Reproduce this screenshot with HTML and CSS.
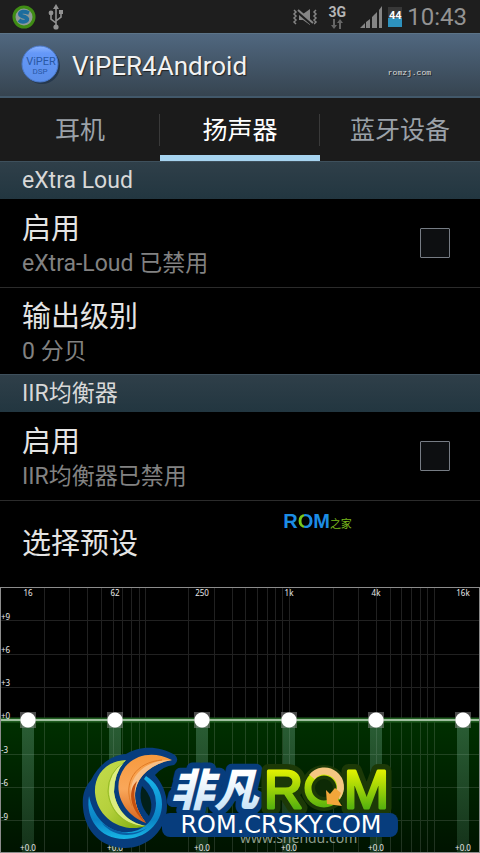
FILE: index.html
```html
<!DOCTYPE html>
<html lang="zh-CN">
<head>
    <meta charset="UTF-8">
    <meta name="viewport" content="width=device-width, initial-scale=1.0">
    <title>ViPER4Android</title>
    <link rel="stylesheet" href="styles.css">
</head>
<body>
    <div class="status-bar">
        <svg class="sync-icon" width="24" height="24" viewBox="0 0 24 24">
            <circle cx="12" cy="12" r="10" fill="#8f9a98" stroke="#3f8c14" stroke-width="3"/>
            <path d="M17 8Q9 5 8 9Q8 11 13 12Q17 14 14 16Q10 18 7 15" fill="none" stroke="#1d6d9d" stroke-width="4"/>
        </svg>
        <svg width="16" height="26" viewBox="0 0 16 26" fill="#929292" stroke="#929292">
            <path d="M8 4V22M8 19L3 15V10M8 17L13 13V8" fill="none" stroke-width="1.6"/>
            <path d="M8 0L11 5H5Z" stroke="none"/>
            <circle cx="3" cy="9" r="2.4" stroke="none"/>
            <circle cx="8" cy="23" r="2.6" stroke="none"/>
            <path d="M11 6H15V10H11Z" stroke="none"/>
        </svg>
        <div class="status-right">
            <svg width="26" height="18" viewBox="0 0 26 18" fill="none" stroke="#858585">
                <path d="M2 2l2 2-2 2 2 2-2 2 2 2-2 2 2 2M24 2l-2 2 2 2-2 2 2 2-2 2 2 2-2 2" stroke-width="1.5"/>
                <path d="M7 6H11L18 1V17L11 12H7Z" fill="#858585" stroke="none"/>
                <path d="M6 4L21 17" stroke="#1e1e1e" stroke-width="3"/>
                <path d="M6 2L21 15" stroke-width="2"/>
            </svg>
            <div class="network">
                <span>3G</span>
                <svg width="14" height="10" viewBox="0 0 14 10" fill="#666">
                    <path d="M3 0H5V6H7L4 10L1 6H3ZM9 10H11V4H13L10 0L7 4H9Z"/>
                </svg>
            </div>
            <svg class="signal-icon" width="23" height="22" viewBox="0 0 23 22" fill="#858585">
                <path d="M0 22L5 17V22ZM6 16L10 13V22H6ZM12 11L15 8V22H12ZM17 6V22H14V9ZM19 4L22 0V22H19Z"/>
            </svg>
            <div class="battery">44</div>
            <time class="clock">10:43</time>
        </div>
    </div>

    <header class="app-header">
        <svg width="40" height="40" viewBox="0 0 40 40">
            <defs>
                <linearGradient id="disc" x1="0" y1="0" x2="0" y2="1">
                    <stop offset="0" stop-color="#8bb4ff"/>
                    <stop offset="0.2" stop-color="#6598f8"/>
                    <stop offset="1" stop-color="#5a8eea"/>
                </linearGradient>
            </defs>
            <circle cx="21" cy="21" r="18" fill="#26384c"/>
            <circle cx="19" cy="19" r="18" fill="url(#disc)" stroke="#4a78c8"/>
            <text x="20" y="20" class="disc-name">ViPER</text>
            <text x="19" y="29" class="disc-dsp">DSP</text>
        </svg>
        <h1>ViPER4Android</h1>
        <span class="site-mark">romzj.com</span>
    </header>

    <nav class="tabs">
        <button type="button">耳机</button>
        <button type="button" class="active">扬声器</button>
        <button type="button">蓝牙设备</button>
    </nav>

    <main>
        <h2 class="section-title">eXtra Loud</h2>
        <label class="setting">
            <span class="setting-text">
                <span class="setting-name">启用</span>
                <span class="setting-info">eXtra-Loud 已禁用</span>
            </span>
            <input type="checkbox">
        </label>
        <div class="setting">
            <div class="setting-text">
                <div class="setting-name">输出级别</div>
                <div class="setting-info">0 分贝</div>
            </div>
        </div>

        <h2 class="section-title">IIR均衡器</h2>
        <label class="setting">
            <span class="setting-text">
                <span class="setting-name">启用</span>
                <span class="setting-info">IIR均衡器已禁用</span>
            </span>
            <input type="checkbox">
        </label>
        <div class="setting">
            <div class="setting-name">选择预设</div>
            <div class="rom-mark"><b>R<span class="rom-o">O</span>M</b>之家</div>
        </div>

        <div class="equalizer">
            <svg class="grid" viewBox="0 0 480 266">
                <defs>
                    <linearGradient id="level" x1="0" y1="0" x2="0" y2="1">
                        <stop offset="0" stop-color="#003000"/>
                        <stop offset="1" stop-color="#001300"/>
                    </linearGradient>
                </defs>
                <rect x="0" y="132" width="480" height="134" fill="url(#level)"/>
                <path class="grid-lines" d="M44 0V265M69 0V265M87 0V265M101 0V265M113 0V265M122 0V265M131 0V265M139 0V265M145 0V265M188 0V265M214 0V265M232 0V265M245 0V265M257 0V265M267 0V265M275 0V265M282 0V265M289 0V265M333 0V265M358 0V265M376 0V265M390 0V265M401 0V265M411 0V265M420 0V265M427 0V265M434 0V265M0 33H480M0 67H480M0 100H480M0 167H480M0 200H480M0 233H480"/>
                <path d="M0 133H480" stroke="#1f5c1f" stroke-width="5"/>
                <path d="M0 133H480" stroke="#9fbf9f" stroke-width="2"/>
                <rect x="0.5" y="0.5" width="479" height="265" fill="none" stroke="#8c8c8c"/>
                <g class="db-labels">
                    <text x="1" y="33">+9</text>
                    <text x="1" y="66">+6</text>
                    <text x="1" y="99">+3</text>
                    <text x="1" y="132">+0</text>
                    <text x="1" y="166">-3</text>
                    <text x="1" y="199">-6</text>
                    <text x="1" y="233">-9</text>
                </g>
            </svg>

            <div class="bands">
                <div class="band"><label for="b16">16</label><input id="b16" type="range" min="-12" max="12" value="0"><output for="b16">+0.0</output></div>
                <div class="band"><label for="b62">62</label><input id="b62" type="range" min="-12" max="12" value="0"><output for="b62">+0.0</output></div>
                <div class="band"><label for="b250">250</label><input id="b250" type="range" min="-12" max="12" value="0"><output for="b250">+0.0</output></div>
                <div class="band"><label for="b1k">1k</label><input id="b1k" type="range" min="-12" max="12" value="0"><output for="b1k">+0.0</output></div>
                <div class="band"><label for="b4k">4k</label><input id="b4k" type="range" min="-12" max="12" value="0"><output for="b4k">+0.0</output></div>
                <div class="band"><label for="b16k">16k</label><input id="b16k" type="range" min="-12" max="12" value="0"><output for="b16k">+0.0</output></div>
            </div>

            <svg class="watermark" viewBox="0 0 320 107">
                <defs>
                    <linearGradient id="lime" x1="0" y1="0" x2="1" y2="1">
                        <stop offset="0" stop-color="#c5dc4c"/>
                        <stop offset="0.5" stop-color="#b5d03c"/>
                        <stop offset="1" stop-color="#79a80b"/>
                    </linearGradient>
                    <linearGradient id="orange" x1="0" y1="0" x2="0" y2="1">
                        <stop offset="0" stop-color="#f79a3e"/>
                        <stop offset="0.5" stop-color="#f9a75a"/>
                        <stop offset="1" stop-color="#d8641c"/>
                    </linearGradient>
                    <linearGradient id="ring" x1="0" y1="0" x2="0" y2="1">
                        <stop offset="0" stop-color="#18b4ea"/>
                        <stop offset="0.7" stop-color="#0b84c5"/>
                        <stop offset="1" stop-color="#17b5e5"/>
                    </linearGradient>
                    <linearGradient id="ice" x1="0" y1="0" x2="0" y2="1">
                        <stop offset="0.3" stop-color="#ffffff"/>
                        <stop offset="1" stop-color="#b9dcf5"/>
                    </linearGradient>
                    <linearGradient id="green" x1="0" y1="22" x2="0" y2="62" gradientUnits="userSpaceOnUse">
                        <stop offset="0" stop-color="#e9f500"/>
                        <stop offset="1" stop-color="#57b20e"/>
                    </linearGradient>
                </defs>
                <text x="160" y="97" class="shendu">www.shendu.com</text>
                <!-- dark blue outline behind the swirl -->
                <path d="M46 8C32 9 19 18 11 34C4 42 2 50 3 62C5 86 22 102 45 102C68 102 87 84 87 60C87 46 81 36 75 29Q83 20 94 19Q100 14 95 9C77-2 57 1 46 8Z" fill="#073d7d"/>
                <path d="M62 40Q76 54 69 70Q57 57 62 40Z" fill="#02201a"/>
                <path d="M66 30C76 36 82 46 82 58C82 78 65 93 44 93C20 93 5 73 9 50C13 70 26 84 42 86C60 88 76 76 76 57Q76 43 64 33Z" fill="url(#ring)"/>
                <path d="M22 77C34 92 54 92 67 82Q45 94 22 77Z" fill="#0a5fa5"/>
                <path d="M46 14C24 15 14 31 15 47C17 72 42 88 66 80C48 77 36 63 34 46Q34 26 46 14Z" fill="url(#lime)"/>
                <path d="M46 14Q34 26 34 46C36 63 48 77 66 80C46 80 30 65 29 46Q29 25 46 14Z" fill="#dcec80"/>
                <path d="M44 16Q28 27 28 45C29 63 42 77 58 80" fill="none" stroke="#95bb25"/>
                <path d="M92 14C74 5 56 8 45 21C30 41 42 69 66 77C53 61 51 43 63 29Q74 17 92 14Z" fill="url(#orange)"/>
                <path d="M92 14C62 13 42 36 55 61Q59 70 66 77C53 61 51 43 63 29Q74 17 92 14Z" fill="#f8c088"/>
                <path d="M66 77C48 62 48 43 57 35C52 48 54 61 66 77Z" fill="#c5500f"/>
                <path d="M82 14C56 16 42 36 52 60" fill="none" stroke="#e07b26"/>
                <text x="90" y="60" class="feifan">非凡</text>
                <g class="rom-back">
                    <text x="184" y="62">R</text>
                    <circle cx="244" cy="42" r="16"/>
                    <text x="264" y="62">M</text>
                </g>
                <g class="rom-front">
                    <text x="184" y="62">R</text>
                    <circle cx="244" cy="42" r="16"/>
                    <text x="264" y="62">M</text>
                </g>
                <path d="M232 31A16 16 0 0 1 257 51" fill="none" stroke="#f5c782" stroke-width="7"/>
                <path d="M246 44L250 48L255 42L261 47L258 54L262 60L247 58Z" fill="#f2a63a"/>
                <rect x="82" y="67" width="236" height="24" rx="8" fill="#073d7d"/>
                <text x="201" y="87" class="crsky">ROM.CRSKY.COM</text>
            </svg>
        </div>
    </main>
</body>
</html>
```
FILE: styles.css
```css
* {
    box-sizing: border-box;
}

body {
    margin: 0;
    background-color: #000;
    color: #e4e4e4;
    font-family: Roboto, "Noto Sans CJK SC", sans-serif;
}

.status-bar {
    display: flex;
    align-items: center;
    gap: 12px;
    height: 33px;
    padding: 0 13px 0 12px;
    background-color: #1e1e1e;
}

.status-right {
    display: flex;
    align-items: center;
    gap: 5px;
    margin-left: auto;
}

.network {
    display: flex;
    flex-direction: column;
    align-items: center;
    width: 28px;
    color: #b5b5b5;
    font-size: 14px;
    font-weight: bold;
    line-height: 14px;
}

.signal-icon {
    margin-left: 4px;
}

.battery {
    width: 14px;
    height: 20px;
    background: linear-gradient(#383838 55%, #2d91bd 55%);
    color: #fff;
    font-size: 11px;
    font-weight: bold;
    line-height: 18px;
    text-align: center;
}

.clock {
    color: #939393;
    font-size: 24px;
    line-height: 32px;
}

.app-header {
    display: flex;
    align-items: center;
    gap: 11px;
    height: 65px;
    padding: 0 49px 0 21px;
    background: linear-gradient(#50677f, #364450);
    border-top: 1px solid #5c7488;
    border-bottom: 2px solid #42586a;
}

.app-header h1 {
    margin: 2px 0 0;
    color: #f2f2f2;
    font-size: 26px;
    font-weight: normal;
    text-shadow: 1px 1px 1px #222;
}

.disc-name, .disc-dsp {
    fill: #2958a4;
    font-size: 11px;
    text-anchor: middle;
}

.disc-dsp {
    font-size: 8px;
}

.site-mark {
    margin: 15px 0 0 auto;
    color: #ddd;
    font-family: "Liberation Mono", monospace;
    font-size: 8px;
    text-shadow: 1px 1px 0 #222;
}

.tabs {
    display: grid;
    grid-template-columns: 1fr 1fr 1fr;
    height: 63px;
    background-color: #1b1b1b;
}

.tabs button {
    padding: 2px 0 0;
    border: none;
    border-bottom: 6px solid transparent;
    background: linear-gradient(#3a3a3a, #3a3a3a) right 16px / 1px 32px no-repeat;
    color: #9ba2a9;
    font-family: inherit;
    font-size: 25px;
    white-space: nowrap;
}

.tabs button:last-child {
    background: none;
}

.tabs .active {
    border-bottom-color: #a6d3ef;
    color: #fff;
}

.section-title {
    height: 38px;
    margin: 0;
    padding-left: 22px;
    border-top: 1px solid #3e505c;
    background: linear-gradient(#2f3f49, #223640);
    color: #d8d8d8;
    font-size: 23px;
    font-weight: normal;
    line-height: 38px;
}

.setting {
    position: relative;
    display: flex;
    align-items: center;
    justify-content: space-between;
    height: 88px;
    padding: 0 30px 0 22px;
}

.setting + .setting {
    height: 87px;
    border-top: 1px solid #2b2b2b;
}

.setting-text {
    display: flex;
    flex-direction: column;
    padding-top: 4px;
}

.setting-name {
    font-size: 29px;
    line-height: 38px;
}

.setting-info {
    color: #828282;
    font-size: 23px;
    line-height: 32px;
}

.setting input {
    appearance: none;
    width: 30px;
    height: 30px;
    margin: 0;
    border: 1px solid #767c84;
    border-radius: 1px;
    background-color: #0d0f11;
}

.setting input:checked {
    background-color: #a6d3ef;
}

.rom-mark {
    position: absolute;
    top: 8px;
    left: 59%;
    color: #78b81b;
    font-size: 11px;
    line-height: 24px;
}

.rom-mark b {
    color: #1c8de4;
    font-family: "Liberation Sans", sans-serif;
    font-size: 20px;
}

.rom-o {
    background: linear-gradient(to right, #78c81b 40%, #1c8de4 40%);
    background-clip: text;
    color: transparent;
}

.equalizer {
    position: relative;
    overflow: hidden;
}

.grid {
    display: block;
    width: 100%;
}

.grid-lines {
    fill: none;
    stroke: #fff;
    stroke-opacity: 0.13;
    shape-rendering: crispEdges;
}

.db-labels, .band {
    color: #e8e8e8;
    fill: #e8e8e8;
    font-family: "Noto Sans", sans-serif;
    font-size: 8px;
    line-height: 10px;
}

.bands {
    position: absolute;
    inset: 0;
    display: flex;
    justify-content: space-between;
    padding: 0 7px 0 18px;
}

.band {
    display: grid;
    grid-template-columns: 20px;
    grid-template-rows: 100%;
    justify-items: center;
}

.band > * {
    grid-area: 1 / 1;
}

.band label {
    padding-top: 1px;
}

.band output {
    align-self: end;
}

.band input {
    appearance: none;
    writing-mode: vertical-lr;
    direction: rtl;
    width: 16px;
    height: 100%;
    margin: 0;
    background: linear-gradient(rgba(120, 180, 150, 0.35), rgba(80, 140, 100, 0.25)) center bottom / 12px 50% no-repeat;
}

.band input::-webkit-slider-thumb {
    appearance: none;
    width: 16px;
    height: 16px;
    background: radial-gradient(circle, #fff 7px, rgba(150, 150, 150, 0.5) 8px);
}

.watermark {
    position: absolute;
    bottom: 0;
    left: calc(100% / 6);
    width: calc(200% / 3);
    pointer-events: none;
}

.shendu {
    fill: #8a9a8a;
    font-family: "Noto Sans", sans-serif;
    font-size: 14px;
}

.feifan {
    fill: url(#ice);
    stroke: #073d7d;
    stroke-width: 12px;
    stroke-linejoin: round;
    paint-order: stroke;
    font-family: "Noto Sans CJK SC", sans-serif;
    font-size: 44px;
    font-style: italic;
    font-weight: 900;
}

.rom-back, .rom-front {
    fill: url(#green);
    stroke: url(#green);
    stroke-width: 3px;
    stroke-linejoin: round;
    font-family: "Liberation Sans", sans-serif;
    font-size: 54px;
}

.rom-back {
    stroke: #1c3907;
    stroke-width: 14px;
}

.rom-back circle {
    fill: #0d2a05;
}

.rom-front circle {
    fill: none;
    stroke-width: 7px;
}

.crsky {
    fill: #fff;
    font-family: "DejaVu Sans", sans-serif;
    font-size: 24px;
    text-anchor: middle;
}
```
